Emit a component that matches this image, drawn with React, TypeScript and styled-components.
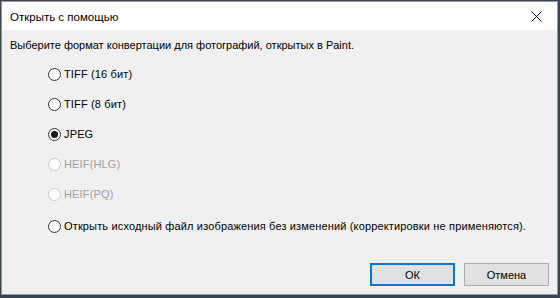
import styled, { createGlobalStyle } from "styled-components";

const GlobalStyle = createGlobalStyle`
  html, body {
    margin: 0;
    padding: 0;
    width: 560px;
    height: 298px;
    overflow: hidden;
    background: #3b4550;
  }
  body {
    font-family: "Segoe UI", "Liberation Sans", Arial, sans-serif;
    font-size: 11px;
  }
`;

const Desktop = styled.div`
  width: 560px;
  height: 298px;
  padding: 1px 2px 3px 1px;
  box-sizing: border-box;
`;

const Dialog = styled.div`
  width: 100%;
  height: 100%;
  display: flex;
  flex-direction: column;
  background: #f0f0f0;
  border: 1px solid #9a9a9a;
  box-sizing: border-box;
`;

const TitleBar = styled.div`
  height: 28px;
  background: #ffffff;
  display: flex;
  align-items: center;
  justify-content: space-between;
  padding-left: 8px;
  color: #000;
`;

const Title = styled.div`
  font-size: 11.5px;
  padding-top: 1px;
`;

const CloseButton = styled.div`
  width: 46px;
  height: 28px;
  display: flex;
  align-items: center;
  justify-content: center;
  margin-right: -2px;
`;

const Body = styled.div`
  flex: 1;
  display: flex;
  flex-direction: column;
  padding: 7px 8px 8px 8px;
`;

const Prompt = styled.div`
  color: #000;
  line-height: 16px;
  white-space: nowrap;
`;

const Options = styled.div`
  display: flex;
  flex-direction: column;
  gap: 14px;
  padding: 13px 0 0 38px;
`;

const Option = styled.label<{ $disabled?: boolean; $spaced?: boolean }>`
  display: flex;
  align-items: center;
  gap: 3px;
  height: 16px;
  white-space: nowrap;
  letter-spacing: 0.15px;
  margin-top: ${(p) => (p.$spaced ? "2px" : "0")};
  color: ${(p) => (p.$disabled ? "#a0a0a0" : "#000")};
`;

const Circle = styled.span<{ $disabled?: boolean; $checked?: boolean }>`
  width: 13px;
  height: 13px;
  border-radius: 50%;
  box-sizing: border-box;
  border: 1px solid ${(p) => (p.$disabled ? "#c8c8c8" : "#333333")};
  background: #ffffff;
  display: flex;
  align-items: center;
  justify-content: center;
  &::after {
    content: "";
    width: 7px;
    height: 7px;
    border-radius: 50%;
    background: #1a1a1a;
    display: ${(p) => (p.$checked ? "block" : "none")};
  }
`;

const Footer = styled.div`
  margin-top: auto;
  display: flex;
  justify-content: flex-end;
  gap: 9px;
`;

const Button = styled.div<{ $default?: boolean }>`
  width: 85px;
  height: 23px;
  box-sizing: border-box;
  background: #e1e1e1;
  border: ${(p) => (p.$default ? "2px solid #0078d7" : "1px solid #adadad")};
  display: flex;
  align-items: center;
  justify-content: center;
  color: #000;
`;

const options = [
  { label: "TIFF (16 бит)" },
  { label: "TIFF (8 бит)" },
  { label: "JPEG", checked: true },
  { label: "HEIF(HLG)", disabled: true },
  { label: "HEIF(PQ)", disabled: true },
  {
    label:
      "Открыть исходный файл изображения без изменений (корректировки не применяются).",
    spaced: true,
  },
];

export default function App() {
  return (
    <>
      <GlobalStyle />
      <Desktop>
        <Dialog>
          <TitleBar>
            <Title>Открыть с помощью</Title>
            <CloseButton>
              <svg width="11" height="11" viewBox="0 0 11 11">
                <path d="M0.5 0.5 L10.5 10.5 M10.5 0.5 L0.5 10.5" stroke="#000" strokeWidth="1" />
              </svg>
            </CloseButton>
          </TitleBar>
          <Body>
            <Prompt>Выберите формат конвертации для фотографий, открытых в Paint.</Prompt>
            <Options>
              {options.map((o) => (
                <Option key={o.label} $disabled={o.disabled} $spaced={o.spaced}>
                  <Circle $disabled={o.disabled} $checked={o.checked} />
                  {o.label}
                </Option>
              ))}
            </Options>
            <Footer>
              <Button $default>ОК</Button>
              <Button>Отмена</Button>
            </Footer>
          </Body>
        </Dialog>
      </Desktop>
    </>
  );
}
